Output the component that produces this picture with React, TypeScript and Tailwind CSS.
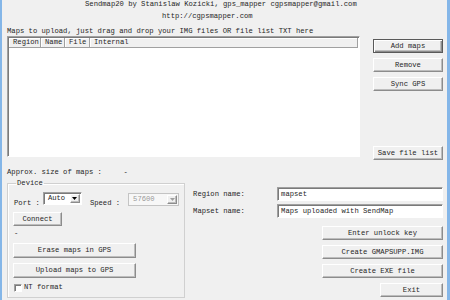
import clsx from "clsx";

const cn = clsx;

const raised =
  "border border-t-white border-l-white border-r-[#8c8c8c] border-b-[#8c8c8c] shadow-[inset_-1px_-1px_0_#bdbdbd] bg-[#f0f0f0]";
const sunken =
  "border border-t-[#a0a0a0] border-l-[#a0a0a0] border-r-white border-b-white shadow-[inset_1px_1px_0_#7a7a7a]";

interface BtnProps {
  label: string;
  className?: string;
  isDefault?: boolean;
}

const Btn = ({ label, className, isDefault }: BtnProps) => (
  <button
    className={cn(
      "flex items-center justify-center whitespace-pre leading-[9px]",
      isDefault
        ? "border border-[#5a5a5a] bg-[#f0f0f0] shadow-[inset_1px_1px_0_white,inset_-1px_-1px_0_#8c8c8c,inset_-2px_-2px_0_#bdbdbd]"
        : raised,
      className
    )}
  >
    {label}
  </button>
);

const Arrow = ({ disabled }: { disabled?: boolean }) => (
  <span className={cn("flex h-full w-[10px] items-center justify-center", raised)}>
    <svg width="5" height="3" viewBox="0 0 5 3">
      <polygon points="0,0 5,0 2.5,3" fill={disabled ? "#a0a0a0" : "#000"} />
    </svg>
  </span>
);

const columns = [
  { name: "Region", w: "w-[32px]" },
  { name: "Name", w: "w-[24px]" },
  { name: "File", w: "w-[25px]" },
  { name: "Internal", w: "flex-1" },
];

export default function App() {
  return (
    <div className="flex h-[300px] w-[450px] flex-col overflow-hidden border-l-2 border-r-[3px] border-[#84b6e8] bg-[#f0f0f0] pl-[5px] pr-[4px] font-['Liberation_Mono','DejaVu_Sans_Mono',monospace] text-[7.2px] leading-[9px] text-[#262626]">
      <p className="whitespace-pre pl-[78px]">
        Sendmap20 by Stanislaw Kozicki, gps_mapper cgpsmapper@gmail.com
      </p>
      <p className="mt-[2.5px] whitespace-pre pl-[155px]">http://cgpsmapper.com</p>
      <p className="mt-[6.5px] whitespace-pre">
        Maps to upload, just drag and drop your IMG files OR file list TXT here
      </p>

      <div className="flex items-start">
        <div className={cn("flex h-[121px] w-[353px] flex-col bg-white p-px", sunken)}>
          <div className="flex h-[10px] border-b border-[#a0a0a0] bg-[#f0f0f0]">
            {columns.map((c) => (
              <div
                key={c.name}
                className={cn(
                  "flex items-center border-r border-[#a0a0a0] pl-[4px] shadow-[inset_1px_1px_0_white]",
                  c.w
                )}
              >
                {c.name}
              </div>
            ))}
          </div>
        </div>

        <div className="ml-auto flex h-[124px] w-[70px] flex-col gap-[5px] pt-[3px]">
          <Btn label="Add maps" isDefault className="h-[14px]" />
          <Btn label="Remove" className="h-[14px]" />
          <Btn label="Sync GPS" className="h-[14px]" />
          <Btn label="Save file list" className="mt-auto h-[14px]" />
        </div>
      </div>

      <p className="mt-[7.5px] whitespace-pre">Approx. size of maps :     -</p>

      <div className="mt-[2px] flex items-start">
        <fieldset className="flex h-[119px] w-[178px] flex-col border border-[#d0d0d0] px-[5px] pt-[4.5px] shadow-[inset_1px_1px_0_white]">
          <legend className="ml-[3px] px-[1px] leading-[9px]">Device</legend>

          <div className="flex items-start">
            <span className="ml-px mt-[6.5px] whitespace-pre">Port :</span>
            <div className={cn("ml-[3px] flex h-[13px] w-[39px] items-center bg-white p-px", sunken)}>
              <span className="flex-1 pl-[3px]">Auto</span>
              <Arrow />
            </div>
            <span className="ml-[8px] mt-[6.5px] whitespace-pre">Speed :</span>
            <div
              className={cn(
                "ml-[8px] mt-px flex h-[13px] w-[51px] items-center bg-[#f7f7f7] p-px",
                "border border-[#c4c4c4]"
              )}
            >
              <span className="flex-1 pl-[3px] text-[#9a9a9a]">57600</span>
              <Arrow disabled />
            </div>
          </div>

          <Btn label="Connect" className="mt-[4.5px] h-[14px] w-[49px]" />
          <p className="ml-px mt-[2.5px]">-</p>
          <Btn label="Erase maps in GPS" className="mt-[5.5px] h-[15px] w-[123px]" />
          <Btn label="Upload maps to GPS" className="mt-[5px] h-[15px] w-[123px]" />

          <label className="ml-px mt-[5px] flex h-[9px] items-center">
            <span className={cn("h-[8px] w-[8px] bg-white", sunken)} />
            <span className="ml-[2px] whitespace-pre">NT format</span>
          </label>
        </fieldset>

        <div className="ml-[8px] flex flex-1 flex-col pt-[8.5px]">
          <div className="flex items-center">
            <span className="w-[84px] whitespace-pre">Region name:</span>
            <div className={cn("flex h-[14px] flex-1 items-center bg-white pl-[3px]", sunken)}>
              mapset
            </div>
          </div>
          <div className="mt-[3px] flex items-center">
            <span className="w-[84px] whitespace-pre">Mapset name:</span>
            <div className={cn("flex h-[14px] flex-1 items-center bg-white pl-[3px]", sunken)}>
              Maps uploaded with SendMap
            </div>
          </div>

          <div className="mt-[8px] flex flex-col items-end gap-[5px]">
            <Btn label="Enter unlock key" className="h-[14px] w-[121px]" />
            <Btn label="Create GMAPSUPP.IMG" className="h-[14px] w-[121px]" />
            <Btn label="Create EXE file" className="h-[14px] w-[121px]" />
            <Btn label="Exit" className="h-[14px] w-[63px]" />
          </div>
        </div>
      </div>
    </div>
  );
}
